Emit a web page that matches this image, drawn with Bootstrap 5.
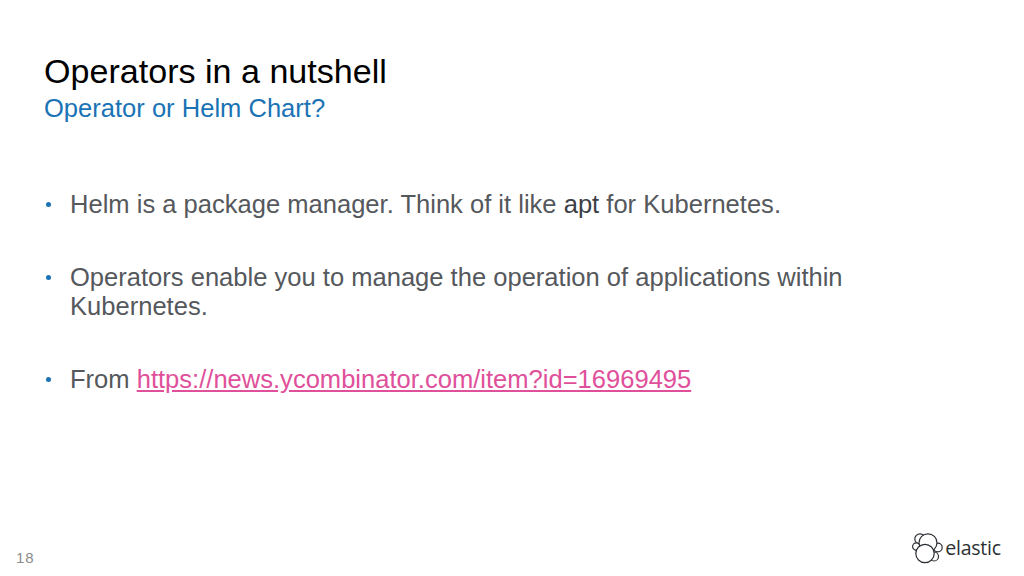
<!DOCTYPE html>
<html lang="en">
<head>
<meta charset="utf-8">
<title>Operators in a nutshell</title>
<link href="https://cdn.jsdelivr.net/npm/bootstrap@5.3.0/dist/css/bootstrap.min.css" rel="stylesheet">
<style>
html,body{height:576px;overflow:hidden;background:#fff;font-family:"Liberation Sans",Arial,sans-serif}
.slide{height:515px;padding:52px 0 0 44px}
.ttl{font-size:34.1px;line-height:38px;color:#000;margin:0}
.sub{font-size:25.55px;line-height:28px;color:#1a73b5;margin:4px 0 0;font-weight:400}
.pts{margin:0;padding:0;margin-top:68px;list-style:none;width:830px;font-size:25.55px;line-height:29px;color:#55585c}
.pts li{position:relative;padding-left:26px;margin-bottom:44px}
.pts li::before{content:"";position:absolute;left:2px;top:12px;width:5px;height:5px;border-radius:50%;background:#1a73b5}
.apt{color:#3c4046}
.pts a{color:#e0509a;text-decoration:underline;text-underline-offset:2px}
.foot{padding:0 23px 0 16px;height:61px}
.pg{font-size:15px;color:#8a8c8e;letter-spacing:.8px;margin-top:34px;line-height:18px}
.logo-wrap{padding-top:18px;gap:2px}
.brand{font-family:"Open Sans","Liberation Sans",sans-serif;font-size:19.5px;color:#2b2f33;letter-spacing:-.2px;line-height:1;padding-top:5px}
</style>
</head>
<body>
<div class="d-flex flex-column" style="height:576px">
<main class="slide">
<h1 class="ttl">Operators in a nutshell</h1>
<h2 class="sub">Operator or Helm Chart?</h2>
<ul class="pts">
<li>Helm is a package manager. Think of it like <span class="apt">apt</span> for Kubernetes.</li>
<li>Operators enable you to manage the operation of applications within Kubernetes.</li>
<li>From <a href="#">https://news.ycombinator.com/item?id=16969495</a></li>
</ul>
</main>
<footer class="foot d-flex justify-content-between">
<div class="pg">18</div>
<div class="d-flex align-items-start logo-wrap">
<svg width="31" height="31" viewBox="0 0 31 31" fill="#fff" stroke="#2b2f33" stroke-width="1.2" aria-hidden="true">
<circle cx="8" cy="6" r="5.200"/>
<circle cx="4.300" cy="13.500" r="3.700"/>
<circle cx="25.800" cy="14.500" r="4.400"/>
<circle cx="22" cy="23.500" r="4.500"/>
<circle cx="16" cy="9.800" r="9"/>
<circle cx="13" cy="20.500" r="9.200"/>
</svg>
<span class="brand">elastic</span>
</div>
</footer>
</div>
<script src="https://cdn.jsdelivr.net/npm/bootstrap@5.3.0/dist/js/bootstrap.bundle.min.js"></script>
</body>
</html>
